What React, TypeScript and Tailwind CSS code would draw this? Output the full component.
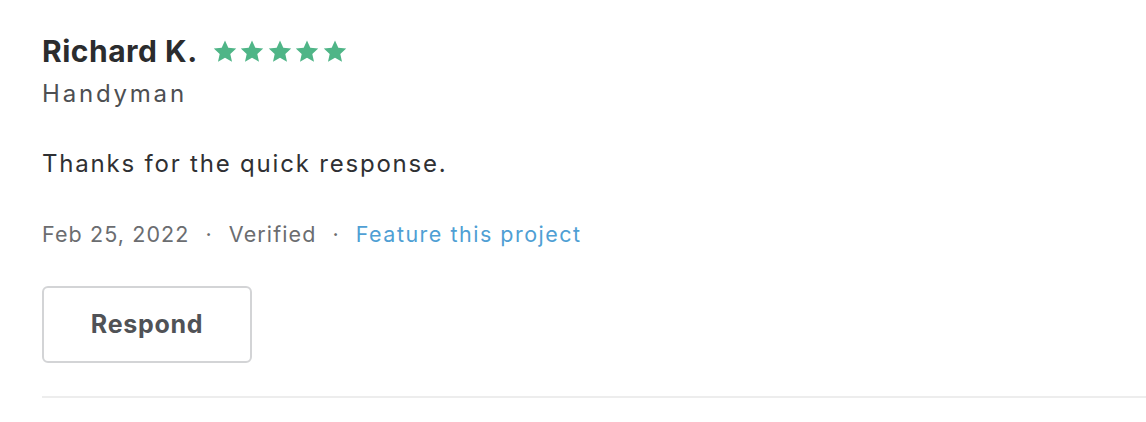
import React from "react";

function Star() {
  return (
    <svg width="24" height="23" viewBox="0 0 24 23" className="block">
      <path
        d="M12 0.6l3.3 7.2 7.9 0.8-5.9 5.3 1.7 7.8L12 17.7l-7 4 1.7-7.8-5.9-5.3 7.9-0.8z"
        fill="#4fb587"
      />
    </svg>
  );
}

export default function App() {
  return (
    <div className="min-h-[422px] w-full bg-white pl-[42px] pt-[33px] font-['Inter',_sans-serif]">
      <div className="flex items-center gap-[15px]">
        <span className="text-[30px] font-bold leading-[36px] tracking-[0.5px] text-[#2b2c2e]">Richard K.</span>
        <div className="flex gap-[3.5px]">
          <Star />
          <Star />
          <Star />
          <Star />
          <Star />
        </div>
      </div>
      <div className="mt-[11px] text-[24px] leading-[28px] tracking-[2.8px] text-[#4d4f52]">Handyman</div>
      <div className="mt-[42px] text-[24px] leading-[28px] tracking-[1.8px] text-[#2f3033]">Thanks for the quick response.</div>
      <div className="mt-[43px] flex items-center text-[21.5px] leading-[26px] tracking-[1.1px] text-[#6b6d70]">
        <span>Feb 25, 2022</span>
        <span className="mx-[16px]">·</span>
        <span>Verified</span>
        <span className="mx-[16px]">·</span>
        <span className="tracking-[1.5px] text-[#4f9fd4]">Feature this project</span>
      </div>
      <button className="mt-[39px] flex h-[77px] w-[210px] items-center justify-center rounded-[6px] border-2 border-[#d3d4d6] bg-white text-[25px] font-bold tracking-[0.7px] text-[#505256]">
        Respond
      </button>
      <div className="mt-[33px] h-[2px] w-full bg-[#ededed]" />
    </div>
  );
}
